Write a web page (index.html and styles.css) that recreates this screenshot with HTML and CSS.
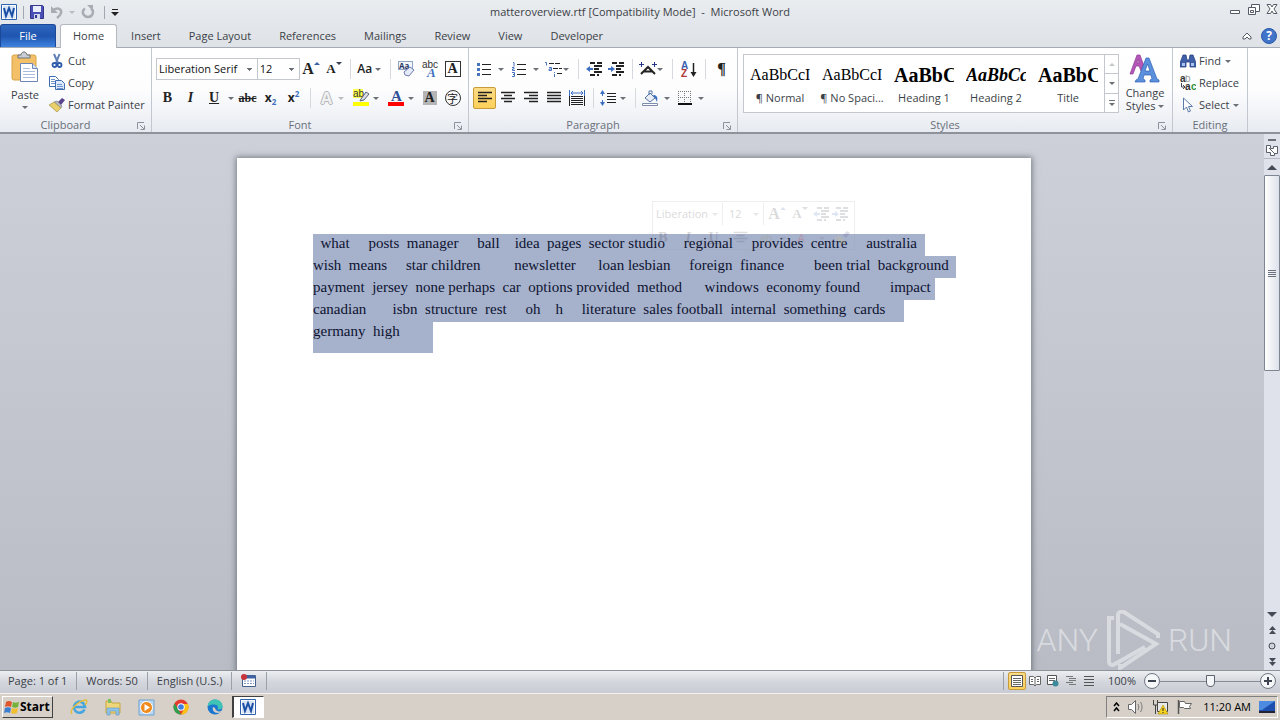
FILE: index.html
```html
<!DOCTYPE html>
<html lang="en">
<head>
    <meta charset="UTF-8">
    <meta name="viewport" content="width=device-width, initial-scale=1.0">
    <title>matteroverview.rtf - Microsoft Word</title>
    <link rel="stylesheet" href="styles.css">
</head>
<body>
    <!-- shared icons -->
    <svg class="sprite" aria-hidden="true">
        <symbol id="word" viewBox="0 0 16 16">
            <path d="M.5.500h15v15H.5z" fill="#fff" stroke="#2f62ad"/>
            <path d="M2 2h12v12H2z" fill="#d6e4f6"/>
            <path d="M3 4l2 8 3-8 3 8 2-8" fill="none" stroke="#1a50a5" stroke-width="2"/>
        </symbol>
        <symbol id="outdent" viewBox="0 0 16 16">
            <path d="M4 2h5M11 2h5M8 5h8M8 8h5M8 11h8M4 14h5M11 14h2" stroke="currentColor" stroke-width="2"/>
            <path d="M0 8l4-3v2h3v2H4v2z" fill="#3c6fc0"/>
        </symbol>
        <symbol id="indent" viewBox="0 0 16 16">
            <path d="M4 2h5M11 2h5M8 5h8M8 8h5M8 11h8M4 14h5M11 14h2" stroke="currentColor" stroke-width="2"/>
            <path d="M7 8L3 5v2H0v2h3v2z" fill="#3c6fc0"/>
        </symbol>
        <symbol id="launch" viewBox="0 0 8 8">
            <path d="M.5 7V.5H7M3 3l4 4M7.500 3.500v4h-4" fill="none" stroke="#8b929c"/>
        </symbol>
        <symbol id="align-center" viewBox="0 0 16 16">
            <path d="M1 2.500h14M4 5.500h8M1 8.500h14M4 11.500h8" stroke="currentColor" stroke-width="1.500"/>
        </symbol>
    </svg>

    <header class="titlebar">
        <div class="quick">
            <svg width="16" height="16"><use href="#word"/></svg>
            <i class="qsep"></i>
            <button aria-label="Save"><svg width="14" height="14" viewBox="0 0 14 14"><path d="M.5.500h12l1 1v12H.5z" fill="#4a4fb5" stroke="#34368c"/><path d="M3 1h8v6H3z" fill="#e9eefa"/><path d="M4 9h6v5H4z" fill="#d5d9ee"/><path d="M5 10h2v3H5z" fill="#34368c"/></svg></button>
            <button aria-label="Undo"><svg width="14" height="14" viewBox="0 0 14 14"><path d="M3 5c5-3 9-1 8 3-.5 2-2 3.500-4 5" fill="none" stroke="#a9adb3" stroke-width="2.500"/><path d="M1 1v7h7z" fill="#a9adb3"/></svg><i class="arrow pale"></i></button>
            <button aria-label="Redo"><svg width="14" height="14" viewBox="0 0 14 14"><path d="M4 3.500C0 6 2 12 7 12s6.500-6 3-8.500" fill="none" stroke="#a9adb3" stroke-width="2.500"/><path d="M6 0h6v6z" fill="#a9adb3"/></svg></button>
            <i class="qsep last"></i>
            <button aria-label="Customize toolbar"><svg width="8" height="8" viewBox="0 0 8 8"><path d="M1 1.500h6" stroke="#222"/><path d="M0 4h8L4 8z" fill="#222"/></svg></button>
        </div>
        <h1 class="caption">matteroverview.rtf [Compatibility Mode] &nbsp;-&nbsp; Microsoft Word</h1>
        <div class="winbtns">
            <button aria-label="Minimize"><svg width="12" height="14" viewBox="0 0 12 14"><path d="M1.500 8.500h9v3h-9z" fill="#fff" stroke="#555b66"/></svg></button>
            <button aria-label="Restore"><svg width="13" height="13" viewBox="0 0 13 13"><path d="M4.500 1.500h8v7h-8z" fill="#fff" stroke="#555b66"/><path d="M1.500 4.500h7v7h-7z" fill="#fff" stroke="#555b66"/><path d="M3.500 7.500h3v2h-3z" fill="none" stroke="#555b66"/></svg></button>
            <button aria-label="Close"><svg width="12" height="12" viewBox="0 0 12 12"><path d="M1 1.500h3.500L6 4l1.500-2.500H11L8 6l3 4.500H7.500L6 8l-1.500 2.500H1L4 6z" fill="#fff" stroke="#555b66"/></svg></button>
        </div>
    </header>

    <nav class="tabs">
        <button class="file">File</button>
        <button class="tab active">Home</button>
        <button class="tab">Insert</button>
        <button class="tab">Page Layout</button>
        <button class="tab">References</button>
        <button class="tab">Mailings</button>
        <button class="tab">Review</button>
        <button class="tab">View</button>
        <button class="tab">Developer</button>
        <div class="help">
            <button aria-label="Collapse ribbon"><svg width="10" height="8" viewBox="0 0 10 8"><path d="M1 5l4-4 4 4v2H7L5 5 3 7H1z" fill="#fff" stroke="#555b66"/></svg></button>
            <button class="question" aria-label="Help">?</button>
        </div>
    </nav>

    <section class="ribbon">
        <div class="group clipboard">
            <div class="body">
                <button class="big">
                    <svg width="28" height="34" viewBox="0 0 28 34"><rect x="1" y="5" width="24" height="25" rx="2" fill="#f3c067" stroke="#d9a448"/><path d="M7 8V5h3c0-4 6-4 6 0h3v3z" fill="#c9cdd3" stroke="#6d727b"/><path d="M9.500 13.500h12l5 5v13h-17z" fill="#fff" stroke="#6c87b5"/><path d="M21.500 13.500v5h5" fill="#dbe5f5" stroke="#6c87b5"/><path d="M12 18.500h7M12 21.500h12M12 24.500h12M12 27.500h12" stroke="#a9bcdc"/></svg>
                    <span>Paste</span><i class="arrow"></i>
                </button>
                <div class="stack">
                    <button class="line"><svg width="16" height="16" viewBox="0 0 16 16"><path d="M5 1l4 9M10.500 1L7 10" stroke="#5f7fb8" stroke-width="2"/><circle cx="5.500" cy="12" r="2" fill="none" stroke="#2c5cab" stroke-width="1.800"/><circle cx="10.500" cy="12" r="2" fill="none" stroke="#2c5cab" stroke-width="1.800"/></svg>Cut</button>
                    <button class="line"><svg width="16" height="16" viewBox="0 0 16 16"><path d="M.5 1.500h6l3 3v7h-9z" fill="#fff" stroke="#3f6db3"/><path d="M2 4.500h4M2 6.500h4M2 8.500h4" stroke="#6d94cf"/><path d="M6.500 5.500h6l3 3v6h-9z" fill="#dce9fa" stroke="#3f6db3"/><path d="M8 9.500h5M8 11.500h6M8 13.500h6" stroke="#6d94cf"/></svg>Copy</button>
                    <button class="line"><svg width="16" height="16" viewBox="0 0 16 16"><path d="M9 5l4-4 3 2-4 5z" fill="#59448d"/><path d="M5 5l3-1 5 5-1 2z" fill="#b6b9c4" stroke="#6d6f7a" stroke-width=".6"/><path d="M0 8l5-3 7 6-4 4z" fill="#e8cf6a" stroke="#9b8c44" stroke-width=".6"/></svg>Format Painter</button>
                </div>
            </div>
            <div class="label">Clipboard<button aria-label="Clipboard options"><svg width="8" height="8"><use href="#launch"/></svg></button></div>
        </div>

        <div class="group font">
            <div class="body rows">
                <div class="row">
                    <select class="face" aria-label="Font"><option>Liberation Serif</option></select>
                    <select class="size" aria-label="Font size"><option>12</option></select>
                    <button class="ib serif s16" aria-label="Grow font">A<sup class="up"></sup></button>
                    <button class="ib serif s13" aria-label="Shrink font">A<sup class="down"></sup></button>
                    <i class="sep"></i>
                    <button class="ib w30" aria-label="Change case"><b class="case">Aa</b><i class="arrow"></i></button>
                    <i class="sep"></i>
                    <button class="ib" aria-label="Clear formatting"><svg width="18" height="18" viewBox="0 0 18 18"><rect x=".5" y="1.500" width="14" height="8" fill="#f3f6fb" stroke="#8fa3c4"/><text x="1" y="9" class="t8">Aa</text><path d="M6 12l6-5 4 3-5 6-4-1z" fill="#e5ebf8" stroke="#6f7fae"/></svg></button>
                    <button class="ib" aria-label="Phonetic guide"><svg width="18" height="20" viewBox="0 0 18 20"><text x="1" y="9" class="t9">abc</text><text x="6" y="18" class="ta">A</text></svg></button>
                    <button class="ib" aria-label="Character border"><span class="boxed">A</span></button>
                </div>
                <div class="row">
                    <button class="ib serif s14">B</button>
                    <button class="ib serif s14"><em>I</em></button>
                    <button class="ib w34 serif s14"><u>U</u><i class="arrow"></i></button>
                    <button class="ib serif s12"><s>abc</s></button>
                    <button class="ib sans s12">x<sub>2</sub></button>
                    <button class="ib sans s12">x<sup>2</sup></button>
                    <i class="sep"></i>
                    <button class="ib w33 glow">A<i class="arrow pale"></i></button>
                    <button class="ib w35" aria-label="Highlight"><svg width="18" height="18" viewBox="0 0 18 18"><rect x="1" y="0" width="10" height="9" fill="#ffff4d"/><text x="1" y="8" class="t9">ab</text><path d="M9 10l5-7 3 2-5 6-4 1z" fill="#d9dee8" stroke="#59616f"/><rect x="1" y="13" width="16" height="4" fill="#ff0"/></svg><i class="arrow"></i></button>
                    <button class="ib w35" aria-label="Font color"><svg width="18" height="18" viewBox="0 0 18 18"><text x="4" y="12" class="tb">A</text><rect x="1" y="13" width="16" height="4" fill="#f00"/></svg><i class="arrow"></i></button>
                    <button class="ib" aria-label="Character shading"><span class="shaded">A</span></button>
                    <button class="ib" aria-label="Enclose characters"><span class="ring">字</span></button>
                </div>
            </div>
            <div class="label">Font<button aria-label="Font options"><svg width="8" height="8"><use href="#launch"/></svg></button></div>
        </div>

        <div class="group paragraph">
            <div class="body rows">
                <div class="row">
                    <button class="ib w35" aria-label="Bullets"><svg width="14" height="14" viewBox="0 0 14 14"><path d="M5 2.500h9M5 7.500h9M5 12.500h9" stroke="#222"/><path d="M0 1h3v3H0zM0 6h3v3H0zM0 11h3v3H0z" fill="#4874bd"/></svg><i class="arrow"></i></button>
                    <button class="ib w35" aria-label="Numbering"><svg width="14" height="16" viewBox="0 0 14 16"><path d="M5 3.500h9M5 8.500h9M5 13.500h9" stroke="#222"/><path d="M1 1.500h1v4M0 6.500h2v1.500H.500v1.500H3M0 11.500h2.500v4H0M1 13.500h1.500" fill="none" stroke="#4874bd"/></svg><i class="arrow"></i></button>
                    <button class="ib w30" aria-label="Multilevel list"><svg width="17" height="16" viewBox="0 0 17 16"><path d="M4 2.500h11M8 7.500h9M12 12.500h5" stroke="#222" stroke-dasharray="5 1"/><path d="M0 1.500h1.500v3M4 6.500h2.500v3H4v-1.500h2M9.500 11v1M9.500 13v3" fill="none" stroke="#4874bd"/></svg><i class="arrow"></i></button>
                    <i class="sep"></i>
                    <button class="ib w22" aria-label="Decrease indent"><svg width="16" height="16"><use href="#outdent"/></svg></button>
                    <button class="ib w22" aria-label="Increase indent"><svg width="16" height="16"><use href="#indent"/></svg></button>
                    <i class="sep"></i>
                    <button class="ib w30" aria-label="Asian layout"><svg width="18" height="16" viewBox="0 0 18 16"><path d="M2 13l7-7 7 7M5 10.500h8" fill="none" stroke="#222" stroke-width="2"/><path d="M0 3.500h5M2.500 1v5M13 3.500h5M15.500 1v5" stroke="#22348c"/></svg><i class="arrow"></i></button>
                    <i class="sep"></i>
                    <button class="ib" aria-label="Sort"><svg width="16" height="17" viewBox="0 0 16 17"><text x="0" y="8" class="tsa">A</text><text x="0" y="16" class="tsz">Z</text><path d="M12.500 2v12" stroke="#222" stroke-width="1.500"/><path d="M9.500 11h6l-3 5z" fill="#222"/></svg></button>
                    <i class="sep"></i>
                    <button class="ib serif s16">¶</button>
                </div>
                <div class="row">
                    <button class="ib on" aria-label="Align left"><svg width="16" height="16" viewBox="0 0 16 16"><path d="M1 2.500h14M1 5.500h9M1 8.500h14M1 11.500h9" stroke="#222" stroke-width="1.500"/></svg></button>
                    <button class="ib" aria-label="Center"><svg width="16" height="16"><use href="#align-center"/></svg></button>
                    <button class="ib" aria-label="Align right"><svg width="16" height="16" viewBox="0 0 16 16"><path d="M1 2.500h14M6 5.500h9M1 8.500h14M6 11.500h9" stroke="#222" stroke-width="1.500"/></svg></button>
                    <button class="ib" aria-label="Justify"><svg width="16" height="16" viewBox="0 0 16 16"><path d="M1 2.500h14M1 5.500h14M1 8.500h14M1 11.500h14" stroke="#222" stroke-width="1.500"/></svg></button>
                    <button class="ib" aria-label="Distributed"><svg width="16" height="16" viewBox="0 0 16 16"><path d="M.5 0v6M15.500 0v6M2 3h12M4 1L2 3l2 2M12 1l2 2-2 2" fill="none" stroke="#3c6fc0"/><path d="M2 6.500h12M2 8.500h12M2 10.500h12M2 12.500h12M2 14.500h12M.5 6v10M15.500 6v10" stroke="#222"/></svg></button>
                    <i class="sep"></i>
                    <button class="ib w32" aria-label="Line spacing"><svg width="16" height="16" viewBox="0 0 16 16"><path d="M7 3.500h9M7 6.500h9M7 9.500h9M7 12.500h9" stroke="#222"/><path d="M2.500 0L0 4h2v2h1V4h2zM2.500 16L0 12h2v-2h1v2h2z" fill="#3c6fc0"/></svg><i class="arrow"></i></button>
                    <i class="sep"></i>
                    <button class="ib w34" aria-label="Shading"><svg width="17" height="17" viewBox="0 0 17 17"><path d="M3 8l5-5 5 5-5 4z" fill="#e7ecf5" stroke="#5573a5"/><path d="M7 5V1h3v3" fill="none" stroke="#5573a5"/><path d="M11 5c4 0 5 2 4 7l-2-4z" fill="#3c6fc0"/><path d="M.5 13.500h15v2H.5z" fill="#fff" stroke="#7c8eac"/></svg><i class="arrow"></i></button>
                    <button class="ib w34" aria-label="Borders"><svg width="16" height="14" viewBox="0 0 16 14"><path d="M2.500 0v13M8.500 0v13M14.500 0v13M2 .5h13M2 6.500h13" stroke="#777" stroke-dasharray="1 1"/><path d="M2 13h14" stroke="#111" stroke-width="2"/></svg><i class="arrow"></i></button>
                </div>
            </div>
            <div class="label">Paragraph<button aria-label="Paragraph options"><svg width="8" height="8"><use href="#launch"/></svg></button></div>
        </div>

        <div class="group styles">
            <div class="body">
                <div class="gallery">
                    <button class="style"><span class="sample">AaBbCcI</span><span>¶ Normal</span></button>
                    <button class="style"><span class="sample">AaBbCcI</span><span>¶ No Spaci...</span></button>
                    <button class="style"><span class="sample head">AaBbC</span><span>Heading 1</span></button>
                    <button class="style"><span class="sample head italic">AaBbCc</span><span>Heading 2</span></button>
                    <button class="style"><span class="sample head">AaBbC</span><span>Title</span></button>
                    <div class="updown">
                        <button aria-label="Scroll up" class="off"><i class="arrow flip"></i></button>
                        <button aria-label="Scroll down"><i class="arrow"></i></button>
                        <button aria-label="More styles"><i class="bar"></i><i class="arrow"></i></button>
                    </div>
                </div>
                <button class="big change">
                    <svg width="32" height="32" viewBox="0 0 32 32"><path d="M1 22L8 3h3l4 11-3 5-2-5H7l-3 8zM8 11h2L9 7z" fill="#b457b8" stroke="#8c3b94" stroke-width=".7"/><path d="M6 30l1-2 2-1L17 6h3l8 21 2 1v2h-9v-2l2-1-1-4h-7l-1 4 2 1v2zM16 19h5l-2.500-7z" fill="#5b90dc" stroke="#2e62b4" stroke-width=".7"/></svg>
                    <span>Change</span><span>Styles <i class="arrow"></i></span>
                </button>
            </div>
            <div class="label">Styles<button aria-label="Styles options"><svg width="8" height="8"><use href="#launch"/></svg></button></div>
        </div>

        <div class="group editing">
            <div class="body">
                <div class="stack">
                    <button class="line"><svg width="16" height="16" viewBox="0 0 16 16"><path d="M3 2h3l1 5h2l1-5h3l3 8v4h-6V9H6v5H0v-4z" fill="#3f60a8" stroke="#28417d" stroke-width=".8"/><path d="M2 10h3v3H2zM11 10h3v3h-3z" fill="#a9c2ee"/></svg>Find<i class="arrow"></i></button>
                    <button class="line"><svg width="16" height="16" viewBox="0 0 16 16"><text x="0" y="7" class="t9 bold">a</text><text x="5" y="7" class="t9 grey">b</text><text x="5" y="15" class="t9 bold">a</text><text x="11" y="15" class="t9 green">c</text><path d="M1.500 8v4h3M3 10l2 2-2 2" fill="none" stroke="#445"/></svg>Replace</button>
                    <button class="line"><svg width="16" height="16" viewBox="0 0 16 16"><path d="M3.500 1v12l3-3 2 5 2-1-2-4.500h4z" fill="#fff" stroke="#5c7aa8"/></svg>Select<i class="arrow"></i></button>
                </div>
            </div>
            <div class="label">Editing</div>
        </div>
    </section>

    <main class="workspace">
        <div class="canvas">
            <article class="paper">
<p class="text"><span>  what     posts  manager     ball    idea  pages  sector studio     regional     provides  centre     australia  </span>
<span>wish  means     star children         newsletter      loan lesbian     foreign  finance        been trial  background  </span>
<span>payment  jersey  none perhaps  car  options provided  method      windows  economy found        impact </span>
<span>canadian       isbn  structure  rest     oh    h     literature  sales football  internal  something  cards     </span>
<span class="last">germany  high         </span></p>
                <div class="mini">
                    <div class="row">
                        <span class="mface">Liberation<i class="arrow"></i></span>
                        <span class="msize">12<i class="arrow"></i></span>
                        <span class="ib serif s16">A<sup class="up"></sup></span>
                        <span class="ib serif s13">A<sup class="down"></sup></span>
                        <svg width="16" height="16"><use href="#outdent"/></svg>
                        <svg width="16" height="16"><use href="#indent"/></svg>
                    </div>
                    <div class="row">
                        <span class="ib serif s14">B</span>
                        <span class="ib serif s14"><em>I</em></span>
                        <span class="ib serif s14"><u>U</u></span>
                        <svg width="23" height="16"><use href="#align-center"/></svg>
                        <span class="ib w33 hl">ab<i class="arrow"></i></span>
                        <span class="ib w33 red">A<i class="arrow"></i></span>
                        <svg width="16" height="16" viewBox="0 0 16 16"><path d="M9 5l4-4 3 2-4 5z" fill="#59448d"/><path d="M0 8l5-3 7 6-4 4z" fill="#e8cf6a"/></svg>
                    </div>
                </div>
            </article>
            <div class="watermark">
                <span>ANY</span>
                <svg width="54" height="60" viewBox="0 0 54 60"><g fill="none" stroke="#e3e5e9" stroke-width="4"><path d="M8 8H3v43c0 4 3 5 6 3l30-17"/><path d="M12 44V5c0-3 3-4 6-3l34 22v4"/><path d="M14 14l36 20-36 24v-4"/></g></svg>
                <span>RUN</span>
            </div>
        </div>
        <div class="scroll">
            <i class="split"></i>
            <button class="ruler" aria-label="View ruler"><svg width="12" height="12" viewBox="0 0 12 12"><path d="M.5 1.500h4v3h3v-2h4v7h-3v2h-4v-3h-4z" fill="#fff" stroke="#59606c"/><path d="M3 4l6 6" stroke="#59606c"/></svg></button>
            <button class="step" aria-label="Up"><i class="tri flip"></i></button>
            <div class="thumb"><i></i><i></i><i></i><i></i></div>
            <div class="foot">
                <button class="step" aria-label="Down"><i class="tri"></i></button>
                <button class="step" aria-label="Previous page"><svg width="7" height="8" viewBox="0 0 7 8"><path d="M0 4l3.500-4L7 4zM0 8l3.500-4L7 8z" fill="#454b57"/></svg></button>
                <button class="step" aria-label="Browse object"><svg width="8" height="8" viewBox="0 0 8 8"><circle cx="4" cy="4" r="3" fill="#cfd3da" stroke="#454b57"/></svg></button>
                <button class="step" aria-label="Next page"><svg width="7" height="8" viewBox="0 0 7 8"><path d="M0 0h7L3.500 4zM0 4h7L3.500 8z" fill="#454b57"/></svg></button>
            </div>
        </div>
    </main>

    <footer class="status">
        <span class="cell">Page: 1 of 1</span>
        <span class="cell">Words: 50</span>
        <span class="cell">English (U.S.)</span>
        <span class="cell"><svg width="16" height="14" viewBox="0 0 16 14"><path d="M1.500 1.500h13v11h-13z" fill="#fff" stroke="#44608f"/><path d="M2 3h12" stroke="#3f62a5" stroke-width="3"/><path d="M3 7h10M3 9.500h10" stroke="#7f9ac6" stroke-dasharray="2 1"/><circle cx="3" cy="3" r="3" fill="#c8323c"/></svg></span>
        <div class="views">
            <button class="on" aria-label="Print layout"><svg width="12" height="12" viewBox="0 0 12 12"><path d="M.5.500h11v11H.5z" fill="#fff" stroke="#555"/><path d="M2 3.500h8M2 5.500h8M2 7.500h8M2 9.500h8" stroke="#666"/></svg></button>
            <button aria-label="Full screen reading"><svg width="12" height="12" viewBox="0 0 12 12"><path d="M.5 1.500h4L6 3l1.500-1.500h4v8h-4L6 11 4.500 9.500h-4zM6 3v8" fill="#fff" stroke="#666"/><path d="M2 4.500h2M2 6.500h2M8 4.500h2M8 6.500h2" stroke="#666"/></svg></button>
            <button aria-label="Web layout"><svg width="12" height="12" viewBox="0 0 12 12"><path d="M.5.500h9v9h-9z" fill="#fff" stroke="#555"/><path d="M2 3.500h6M2 5.500h6" stroke="#666"/><circle cx="8.500" cy="8.500" r="3" fill="#3d8a9c"/></svg></button>
            <button aria-label="Outline"><svg width="12" height="12" viewBox="0 0 12 12"><path d="M1 1.500h7M4 3.500h7M4 5.500h7M1 7.500h7M4 9.500h7" stroke="#777"/></svg></button>
            <button aria-label="Draft"><svg width="12" height="12" viewBox="0 0 12 12"><path d="M1 1.500h10M1 4.500h10M1 7.500h10M1 10.500h10" stroke="#555"/></svg></button>
        </div>
        <label class="percent" for="zoom">100%</label>
        <button class="round" aria-label="Zoom out"><svg width="16" height="16" viewBox="0 0 16 16"><circle cx="8" cy="8" r="7.500" fill="#f5f6f8" stroke="#6f7682"/><path d="M4 8h8" stroke="#3f4550" stroke-width="2"/></svg></button>
        <input class="zoom" id="zoom" type="range" min="0" max="100" value="50">
        <button class="round" aria-label="Zoom in"><svg width="16" height="16" viewBox="0 0 16 16"><circle cx="8" cy="8" r="7.500" fill="#f5f6f8" stroke="#6f7682"/><path d="M4 8h8M8 4v8" stroke="#3f4550" stroke-width="2"/></svg></button>
    </footer>

    <div class="taskbar">
        <button class="start"><svg width="16" height="16" viewBox="0 0 16 16"><path d="M2 3c2-1.500 4-1 6 0L7 8c-2-1-4-1-6 0z" fill="#e0552b"/><path d="M9 3c2 1 4 1 6-.5L14 8c-2 1-4 1-6 0z" fill="#74b23a"/><path d="M1 9c2-1 4-1 6 0l-1 5c-2-1-4-1-6 0z" fill="#3c7fd0"/><path d="M8 9c2 1 4 1 6 0l-1 5c-2 1-4 1-6 0z" fill="#f2bd2f"/></svg>Start</button>
        <button class="app" aria-label="Internet Explorer"><svg width="18" height="18" viewBox="0 0 18 18"><path d="M14.500 11.500A5.500 5.500 0 1 1 15 9H5" fill="none" stroke="#45a5e0" stroke-width="2.600"/><path d="M2 16C-1 13 7 3 16 2c2 1 0 4-1 5" fill="none" stroke="#e5bd3c" stroke-width="1.400"/></svg></button>
        <button class="app" aria-label="Explorer"><svg width="16" height="18" viewBox="0 0 16 18"><path d="M1 3h5l1 2h8v10H1z" fill="#f0d67a" stroke="#c9a640"/><path d="M3 1h3v4H3z" fill="#7cc062"/><path d="M2 17v-7h12v7h-3v-4H5v4z" fill="#8fc4ea" stroke="#5b95c2" stroke-width=".6"/></svg></button>
        <button class="app" aria-label="Media Player"><svg width="17" height="17" viewBox="0 0 17 17"><path d="M1 1h15v15H1z" fill="#b9d6f0" stroke="#6ea3d3"/><circle cx="8.500" cy="8.500" r="6" fill="#f08a1c" stroke="#fff"/><path d="M6.500 5l5.500 3.500L6.500 12z" fill="#fff"/></svg></button>
        <button class="app" aria-label="Chrome"><svg width="16" height="16" viewBox="0 0 16 16"><circle cx="8" cy="8" r="7.500" fill="#e33b2e"/><path d="M1.500 4.200L5 10l3 5.500A7.500 7.500 0 0 1 1.500 4.200z" fill="#2da14f"/><path d="M8 5h7a7.500 7.500 0 0 1-7 10.500l3-5.500z" fill="#fbc116"/><circle cx="8" cy="8" r="3.700" fill="#fff"/><circle cx="8" cy="8" r="2.800" fill="#3f7de0"/></svg></button>
        <button class="app" aria-label="Edge"><svg width="16" height="16" viewBox="0 0 16 16"><circle cx="8" cy="8" r="7.500" fill="#1b76cf"/><path d="M.6 8C1 3 4 .5 8 .5c4.500 0 7.500 3 7.500 6.500 0 3-2.500 4-5 3.500 1-1 1-5-3-5C4 5.500 1.500 6 .6 8z" fill="#3fc3b4"/><path d="M6 8c-1 3 1 6 5 6 2 0 3-1 3.500-2-3 1-6 0-6.500-3z" fill="#d6d0c8"/></svg></button>
        <button class="app open" aria-label="Word"><svg width="16" height="16"><use href="#word"/></svg></button>
        <div class="tray">
            <svg width="7" height="10" viewBox="0 0 7 10"><path d="M1 4l2.500-3L6 4M1 9l2.500-3L6 9" fill="none" stroke="#000" stroke-width="1.500"/></svg>
            <svg width="16" height="14" viewBox="0 0 16 14"><path d="M.5 4.500h3l4-4v13l-4-4h-3z" fill="#fff" stroke="#666"/><path d="M10 4c1 2 1 4 0 6M12.500 2c2 3 2 7 0 10" fill="none" stroke="#777"/></svg>
            <svg width="17" height="16" viewBox="0 0 17 16"><path d="M5.500 3.500h10v9h-10z" fill="#e9e9e9" stroke="#444"/><path d="M1.500 1v5h4V1M3.500 6v9" fill="none" stroke="#444"/><path d="M11 6l5 9H6z" fill="#f7d420" stroke="#a98b00" stroke-width=".6"/><path d="M11 9v3M11 13v1" stroke="#222"/></svg>
            <svg width="16" height="16" viewBox="0 0 16 16"><path d="M1.500 1v14" stroke="#555" stroke-width="1.500"/><path d="M2.500 2.500h5l1 2h6l-2 3 1 2h-6l-1-1h-4z" fill="#fff" stroke="#666"/></svg>
            <span class="clock">11:20 AM</span>
            <svg width="16" height="12" viewBox="0 0 16 12"><path d="M0 0h16v10H0z" fill="#1c4fae"/><path d="M0 0h16L3 9H0z" fill="#4c8be0"/><path d="M0 11h16" stroke="#223" stroke-width="2"/></svg>
        </div>
    </div>
</body>
</html>
```
FILE: styles.css
```css
* {
    box-sizing: border-box;
}
body {
    margin: 0;
    height: 100vh;
    display: flex;
    flex-direction: column;
    overflow: hidden;
    font-family: "Open Sans", "Noto Sans", sans-serif;
    font-size: 11px;
    line-height: 14px;
    color: #3b3f47;
    background: #c5c8cf;
}
button, select, input {
    font: inherit;
    color: inherit;
    margin: 0;
    padding: 0;
    border: 0;
    background: none;
}
button {
    display: flex;
    align-items: center;
    justify-content: center;
    white-space: nowrap;
}
svg {
    display: block;
    flex: none;
}
.sprite {
    position: absolute;
    width: 0;
    height: 0;
}
.arrow {
    flex: none;
    display: inline-block;
    border: 3px solid transparent;
    border-top-color: #6b6f76;
    border-bottom: 0;
}
.arrow.pale {
    border-top-color: #b9bcc1;
}
.flip {
    transform: rotate(180deg);
}

/* title bar */
.titlebar {
    height: 24px;
    flex: none;
    display: grid;
    grid-template-columns: 1fr auto 1fr;
    align-items: center;
    background: linear-gradient(#eaedf0, #e3e6ea);
}
.quick {
    display: flex;
    align-items: center;
    gap: 6px;
    padding-left: 1px;
}
.quick button {
    gap: 5px;
}
.qsep {
    width: 1px;
    height: 13px;
    background: #a3a8b0;
}
.qsep.last {
    margin-left: 3px;
}
.caption {
    margin: 0;
    font-size: 11px;
    font-weight: normal;
}
.winbtns {
    display: flex;
    justify-content: flex-end;
    gap: 6px;
    padding: 0 2px 6px 0;
}

/* tabs */
.tabs {
    height: 24px;
    flex: none;
    display: flex;
    background: linear-gradient(#e3e6ea, #dfe3e7);
    border-bottom: 1px solid #a5abb4;
}
.file {
    width: 56px;
    margin-right: 4px;
    color: #fff;
    background: linear-gradient(#2f66bd, #1f55b0 50%, #3f83e0);
    border: 1px solid #1c489a;
    border-bottom: 0;
    border-radius: 3px 3px 0 0;
}
.tab {
    padding: 0 13px;
    border: 1px solid transparent;
    border-bottom: 0;
}
.tab.active {
    background: #fff;
    border-color: #b4b9c1;
    border-radius: 3px 3px 0 0;
    margin-bottom: -1px;
    padding: 0 12px 2px;
}
.help {
    margin-left: auto;
    display: flex;
    align-items: center;
    gap: 9px;
    padding-right: 3px;
}
.question {
    width: 16px;
    height: 16px;
    border-radius: 50%;
    background: #3f74c9;
    border: 1px solid #2b5aa8;
    color: #fff;
    font-size: 12px;
    font-weight: bold;
}

/* ribbon */
.ribbon {
    flex: none;
    display: flex;
    height: 86px;
    background: linear-gradient(#fff, #fdfdfe 50%, #e7ebf1);
    border-bottom: 2px solid #8d929b;
}
.group {
    display: flex;
    flex-direction: column;
    border-right: 1px solid #c3c8d0;
}
.clipboard {
    width: 152px;
}
.font {
    width: 317px;
}
.paragraph {
    width: 269px;
}
.styles {
    width: 435px;
}
.editing {
    width: 75px;
}
.body {
    height: 70px;
    display: flex;
    padding: 2px 4px 0;
}
.rows {
    flex-direction: column;
    gap: 5px;
    padding-top: 9px;
}
.label {
    position: relative;
    height: 14px;
    text-align: center;
    color: #6a707a;
    padding-right: 20px;
}
.editing .label {
    padding-right: 0;
}
.label button {
    position: absolute;
    right: 6px;
    top: 4px;
}
.big {
    flex-direction: column;
    justify-content: flex-start;
    width: 42px;
    margin-right: 3px;
}
.big span {
    margin-top: 4px;
    line-height: 13px;
}
.big > .arrow {
    margin-top: 5px;
}
.big .arrow {
    vertical-align: 2px;
}
.stack {
    display: flex;
    flex-direction: column;
}
.line {
    height: 22px;
    gap: 3px;
    justify-content: flex-start;
}
.line .arrow {
    margin-left: 1px;
}
.row {
    display: flex;
    align-items: center;
    height: 24px;
}
.ib {
    display: flex;
    align-items: center;
    justify-content: center;
    width: 23px;
    height: 22px;
    line-height: 18px;
    color: #222;
}
.ib .arrow {
    margin-left: auto;
    margin-right: 4px;
}
.w22 {
    width: 22px;
}
.w30, .w32, .w33, .w34, .w35 {
    padding-left: 2px;
    justify-content: flex-start;
}
.w30 {
    width: 30px;
}
.w32 {
    width: 32px;
}
.w33 {
    width: 33px;
}
.w34 {
    width: 34px;
}
.w35 {
    width: 35px;
    padding-left: 4px;
}
.w34.serif {
    padding-left: 7px;
}
.serif .arrow {
    margin-right: 2px;
}
.on {
    background: linear-gradient(#fbdc86, #fdd05a);
    border: 1px solid #c79a3a;
    border-radius: 2px;
}
.sep {
    width: 1px;
    height: 20px;
    margin: 0 4px 0 5px;
    background: #d6d9de;
}
.serif {
    font-family: "Liberation Serif", serif;
    font-weight: bold;
}
.sans {
    font-weight: bold;
}
.s12 {
    font-size: 12px;
}
.s13 {
    font-size: 13px;
}
.s14 {
    font-size: 14px;
}
.s16 {
    font-size: 16px;
}
.sans sub, .sans sup {
    font-size: 8px;
    line-height: 8px;
    color: #3c6fc0;
}
.sans sub {
    margin-top: 8px;
}
.sans sup {
    margin-bottom: 8px;
}
.up, .down {
    border: 3px solid transparent;
    border-bottom-color: #3a5fa3;
    border-top: 0;
    margin-bottom: 11px;
}
.down {
    border-top: 3px solid #3a4152;
    border-bottom: 0;
}
.case {
    font-size: 12px;
    font-weight: 600;
}
.boxed {
    width: 16px;
    height: 16px;
    border: 1px solid #333;
    text-align: center;
    font: bold 14px/14px "Liberation Serif", serif;
}
.shaded {
    width: 14px;
    height: 14px;
    background: #b5b5b5;
    text-align: center;
    font: bold 14px/14px "Liberation Serif", serif;
}
.ring {
    width: 16px;
    height: 16px;
    border: 1px solid #333;
    border-radius: 50%;
    font: 11px/14px "Noto Sans CJK SC", sans-serif;
    text-align: center;
}
.glow {
    font: bold 16px/18px "Open Sans", sans-serif;
    color: #f1f1f2;
    text-shadow: 1px 0 #b3b6ba, -1px 0 #b3b6ba, 0 1px #b3b6ba, 0 -1px #b3b6ba;
}
.w33.glow {
    padding-left: 6px;
}
.t8 {
    font: bold 8px "Open Sans", sans-serif;
    fill: #26355f;
}
.t9 {
    font: 10px "Liberation Sans", sans-serif;
    fill: #333;
}
.bold {
    font-weight: bold;
}
.grey {
    fill: #999;
}
.green {
    font-weight: bold;
    fill: #2f8f3a;
}
.ta {
    font: italic bold 13px "Liberation Serif", serif;
    fill: #3c6fc0;
}
.tb {
    font: bold 15px "Liberation Serif", serif;
    fill: #2f4f96;
}
.tsa, .tsz {
    font: bold 10px "Liberation Sans", sans-serif;
    fill: #3a5fb0;
}
.tsz {
    fill: #b03a3a;
}
.face, .size {
    appearance: none;
    height: 22px;
    padding-left: 2px;
    color: #111;
    border: 1px solid #c4c8ce;
    background: linear-gradient(#6b6f76, #6b6f76) no-repeat right 5px top 9px / 5px 1px, linear-gradient(#6b6f76, #6b6f76) no-repeat right 6px top 10px / 3px 1px, linear-gradient(#6b6f76, #6b6f76) no-repeat right 7px top 11px / 1px 1px, #fff;
}
.face {
    width: 102px;
}
.size {
    width: 43px;
    margin-left: -1px;
}

/* style gallery */
.gallery {
    display: flex;
    height: 59px;
    margin: 4px 5px 0 1px;
    border: 1px solid #c4c8ce;
    background: #fff;
}
.style {
    width: 72px;
    flex-direction: column;
    justify-content: flex-end;
    padding-bottom: 7px;
}
.sample {
    width: 60px;
    height: 26px;
    margin-bottom: 3px;
    overflow: hidden;
    text-align: left;
    font: 16px/26px "Liberation Serif", serif;
    color: #000;
}
.sample.head {
    font-weight: bold;
    font-size: 20px;
}
.sample.italic {
    font-size: 18px;
    font-style: italic;
}
.updown {
    width: 14px;
    display: flex;
    flex-direction: column;
    border-left: 1px solid #c4c8ce;
}
.updown button {
    flex: 1;
    flex-direction: column;
    gap: 2px;
}
.updown button + button {
    border-top: 1px solid #c4c8ce;
}
.updown .off {
    opacity: 0.4;
}
.bar {
    width: 6px;
    height: 1px;
    background: #6b6f76;
}
.styles .body {
    padding-left: 4px;
}
.change {
    margin: 2px 0 0;
}
.change span {
    margin: 0;
}
.change svg {
    margin-bottom: 2px;
}

.editing .body {
    padding-left: 7px;
}

/* document area */
.workspace {
    flex: 1;
    min-height: 0;
    display: flex;
    background: linear-gradient(#cdd0d8, #b9bcc4);
}
.canvas {
    position: relative;
    flex: 1;
    padding: 24px 0 0 4px;
    overflow: hidden;
}
.paper {
    position: relative;
    width: 794px;
    height: 1123px;
    margin: 0 auto;
    padding: 76px;
    background: #fff;
    box-shadow: 0 0 6px 1px rgba(60, 65, 75, 0.6);
}
.text {
    margin: 0;
    display: flex;
    flex-direction: column;
    align-items: flex-start;
    font: 15px/18px "Liberation Serif", serif;
    color: #0d1330;
}
.text span {
    height: 22px;
    white-space: pre;
    background: #a6b1cc;
}
.text .last {
    height: 31px;
}
.mini {
    position: absolute;
    left: 415px;
    top: 43px;
    width: 203px;
    height: 49px;
    border: 1px solid #999;
    opacity: 0.16;
}
.mini .row {
    gap: 3px;
}
.mini .row + .row {
    gap: 0;
    justify-content: space-between;
    padding-right: 4px;
}
.mini .ib {
    width: 20px;
}
.mini .w33 {
    width: 33px;
}
.mface, .msize {
    display: flex;
    align-items: center;
    justify-content: space-between;
    height: 22px;
    width: 70px;
    padding: 0 4px 0 3px;
    color: #111;
    border-right: 1px solid #999;
}
.msize {
    width: 38px;
}
.hl {
    color: #a09000;
}
.red {
    color: #d00;
}
.watermark {
    position: absolute;
    right: 32px;
    bottom: 0;
    display: flex;
    align-items: center;
    gap: 8px;
    font: 300 32px/60px "Roboto", sans-serif;
    color: #e3e5e9;
    opacity: 0.75;
}

/* vertical scroll bar */
.scroll {
    width: 16px;
    display: flex;
    flex-direction: column;
    background: #dfe2ea;
}
.split {
    height: 2px;
    margin: 5px 4px 1px;
    background: #6a707c;
}
.ruler {
    height: 17px;
    border-bottom: 1px solid #b4b9c3;
}
.step {
    height: 16px;
}
.tri {
    border: 5px solid transparent;
    border-top-color: #454b57;
    border-bottom: 0;
}
.thumb {
    height: 196px;
    display: flex;
    flex-direction: column;
    align-items: center;
    justify-content: center;
    gap: 1px;
    border: 1px solid #7e8593;
    border-radius: 1px;
    background: linear-gradient(90deg, #fff, #dde1ea);
}
.thumb i {
    width: 8px;
    height: 1px;
    background: #6a707c;
}
.foot {
    margin-top: auto;
}
.foot .step {
    width: 16px;
    height: 16px;
}

/* status bar */
.status {
    flex: none;
    display: flex;
    align-items: center;
    height: 23px;
    padding: 0 4px 2px 0;
    background: linear-gradient(#eceef1, #d3d6dc 50%, #c9ccd3);
    border-top: 1px solid #8d929b;
}
.cell {
    height: 18px;
    display: flex;
    align-items: center;
    padding: 0 9px 0 8px;
    border-right: 1px solid #9ba0a9;
}
.cell + .cell {
    padding-left: 9px;
}
.views {
    margin-left: auto;
    display: flex;
    padding-left: 4px;
    border-left: 1px solid #9ba0a9;
}
.views button {
    width: 18px;
    height: 18px;
}
.percent {
    padding: 0 8px 0 10px;
}
.zoom {
    appearance: none;
    width: 100px;
    height: 16px;
    background: linear-gradient(#868c96, #868c96) no-repeat center / 100% 1px;
}
.zoom::-webkit-slider-thumb {
    appearance: none;
    width: 9px;
    height: 12px;
    background: #f5f6f8;
    border: 1px solid #5e646f;
    border-radius: 1px 1px 5px 5px;
}

/* windows taskbar */
.taskbar {
    flex: none;
    height: 27px;
    display: flex;
    align-items: center;
    padding: 0 2px;
    background: #d6d0c8;
    border-top: 1px solid #f4f2ee;
    color: #000;
}
.start {
    height: 22px;
    padding: 0 2px 0 1px;
    font-size: 12px;
    font-weight: bold;
    background: #d6d0c8;
    border: 1px solid;
    border-color: #fff #404040 #404040 #fff;
    margin-right: 9px;
}
.app {
    width: 34px;
    height: 22px;
}
.app.open {
    width: 32px;
    background: #fff;
    border: 1px solid;
    border-color: #404040 #fff #fff #404040;
    border-left-width: 2px;
}
.tray {
    margin-left: auto;
    height: 22px;
    display: flex;
    align-items: center;
    gap: 8px;
    padding: 0 2px 0 6px;
    border: 1px solid;
    border-color: #808080 #fff #fff #808080;
}
.clock {
    margin-left: 2px;
}
```
